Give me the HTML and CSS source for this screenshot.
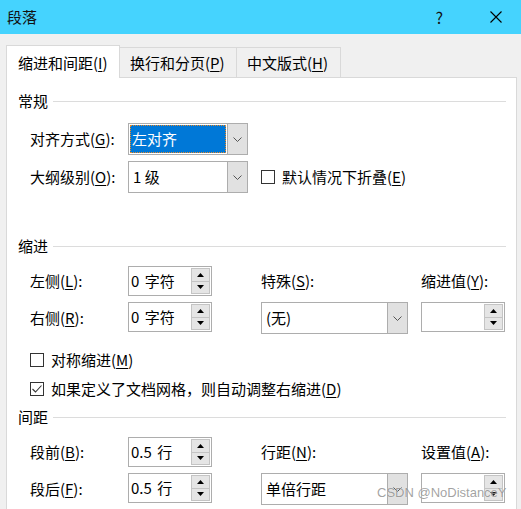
FILE: index.html
```html
<!DOCTYPE html>
<html lang="zh-CN">
<head>
<meta charset="utf-8">
<title>段落</title>
<link rel="stylesheet" href="styles.css">
</head>
<body>
<div class="window">
  <div class="titlebar">
    <span class="title">段落</span>
    <span class="help">?</span>
    <svg class="close" width="12" height="12" viewBox="0 0 12 12"><path d="M0.5 0.5 L11.5 11.5 M11.5 0.5 L0.5 11.5" stroke="#000" stroke-width="1.1" fill="none"/></svg>
  </div>

  <div class="tabs">
    <div class="tab active">缩进和间距(<u>I</u>)</div>
    <div class="tab">换行和分页(<u>P</u>)</div>
    <div class="tab">中文版式(<u>H</u>)</div>
  </div>

  <div class="panel">
    <div class="section-head s1"><span>常规</span></div>
    <div class="grid general">
      <div class="lbl">对齐方式(<u>G</u>):</div>
      <div class="combo">
        <div class="combo-val"><span class="sel">左对齐</span></div>
        <div class="combo-btn"><svg width="9" height="5" viewBox="0 0 9 5"><polyline points="0.5,0.5 4.5,4.5 8.5,0.5" fill="none" stroke="#555" stroke-width="1"/></svg></div>
      </div>
      <div></div>
      <div></div>
      <div class="lbl">大纲级别(<u>O</u>):</div>
      <div class="combo">
        <div class="combo-val"><span class="txt">1 级</span></div>
        <div class="combo-btn"><svg width="9" height="5" viewBox="0 0 9 5"><polyline points="0.5,0.5 4.5,4.5 8.5,0.5" fill="none" stroke="#555" stroke-width="1"/></svg></div>
      </div>
      <div></div>
      <div class="check"><span class="box"></span><span>默认情况下折叠(<u>E</u>)</span></div>
    </div>

    <div class="section-head s2"><span>缩进</span></div>
    <div class="grid spacing g2">
      <div class="lbl">左侧(<u>L</u>):</div>
      <div class="spin">
        <div class="spin-val">0 字符</div>
        <div class="spin-btns">
          <div class="sb"><svg width="7" height="4" viewBox="0 0 7 4"><polygon points="3.5,0 7,4 0,4" fill="#000"/></svg></div>
          <div class="sb"><svg width="7" height="4" viewBox="0 0 7 4"><polygon points="0,0 7,0 3.5,4" fill="#000"/></svg></div>
        </div>
      </div>
      <div></div>
      <div class="lbl">特殊(<u>S</u>):</div>
      <div></div>
      <div class="lbl">缩进值(<u>Y</u>):</div>

      <div class="lbl">右侧(<u>R</u>):</div>
      <div class="spin">
        <div class="spin-val">0 字符</div>
        <div class="spin-btns">
          <div class="sb"><svg width="7" height="4" viewBox="0 0 7 4"><polygon points="3.5,0 7,4 0,4" fill="#000"/></svg></div>
          <div class="sb"><svg width="7" height="4" viewBox="0 0 7 4"><polygon points="0,0 7,0 3.5,4" fill="#000"/></svg></div>
        </div>
      </div>
      <div></div>
      <div class="combo wide">
        <div class="combo-val"><span class="txt">(无)</span></div>
        <div class="combo-btn"><svg width="9" height="5" viewBox="0 0 9 5"><polyline points="0.5,0.5 4.5,4.5 8.5,0.5" fill="none" stroke="#555" stroke-width="1"/></svg></div>
      </div>
      <div></div>
      <div class="spin">
        <div class="spin-val"></div>
        <div class="spin-btns">
          <div class="sb"><svg width="7" height="4" viewBox="0 0 7 4"><polygon points="3.5,0 7,4 0,4" fill="#000"/></svg></div>
          <div class="sb"><svg width="7" height="4" viewBox="0 0 7 4"><polygon points="0,0 7,0 3.5,4" fill="#000"/></svg></div>
        </div>
      </div>
    </div>

    <div class="checks">
      <div class="check"><span class="box"></span><span>对称缩进(<u>M</u>)</span></div>
      <div class="check"><span class="box checked"><svg width="12" height="12" viewBox="0 0 12 12"><polyline points="1.5,6 4.5,9 10.5,2.5" fill="none" stroke="#333" stroke-width="1.1"/></svg></span><span>如果定义了文档网格，则自动调整右缩进(<u>D</u>)</span></div>
    </div>

    <div class="section-head s3"><span>间距</span></div>
    <div class="grid spacing g3">
      <div class="lbl">段前(<u>B</u>):</div>
      <div class="spin">
        <div class="spin-val">0.5 行</div>
        <div class="spin-btns">
          <div class="sb"><svg width="7" height="4" viewBox="0 0 7 4"><polygon points="3.5,0 7,4 0,4" fill="#000"/></svg></div>
          <div class="sb"><svg width="7" height="4" viewBox="0 0 7 4"><polygon points="0,0 7,0 3.5,4" fill="#000"/></svg></div>
        </div>
      </div>
      <div></div>
      <div class="lbl">行距(<u>N</u>):</div>
      <div></div>
      <div class="lbl">设置值(<u>A</u>):</div>

      <div class="lbl">段后(<u>F</u>):</div>
      <div class="spin">
        <div class="spin-val">0.5 行</div>
        <div class="spin-btns">
          <div class="sb"><svg width="7" height="4" viewBox="0 0 7 4"><polygon points="3.5,0 7,4 0,4" fill="#000"/></svg></div>
          <div class="sb"><svg width="7" height="4" viewBox="0 0 7 4"><polygon points="0,0 7,0 3.5,4" fill="#000"/></svg></div>
        </div>
      </div>
      <div></div>
      <div class="combo wide">
        <div class="combo-val"><span class="txt">单倍行距</span></div>
        <div class="combo-btn"><svg width="9" height="5" viewBox="0 0 9 5"><polyline points="0.5,0.5 4.5,4.5 8.5,0.5" fill="none" stroke="#555" stroke-width="1"/></svg></div>
      </div>
      <div></div>
      <div class="spin">
        <div class="spin-val"></div>
        <div class="spin-btns">
          <div class="sb"><svg width="7" height="4" viewBox="0 0 7 4"><polygon points="3.5,0 7,4 0,4" fill="#000"/></svg></div>
          <div class="sb"><svg width="7" height="4" viewBox="0 0 7 4"><polygon points="0,0 7,0 3.5,4" fill="#000"/></svg></div>
        </div>
      </div>
    </div>
  </div>

  <div class="watermark">CSDN @NoDistanceY</div>
</div>
</body>
</html>
```

FILE: styles.css
```css
* { box-sizing: border-box; }

html, body {
  margin: 0;
  padding: 0;
}

body {
  width: 521px;
  height: 509px;
  overflow: hidden;
  background: #f0f0f0;
  font-family: "Noto Sans CJK SC", "Microsoft YaHei", sans-serif;
  font-size: 15px;
  color: #000;
}

.window {
  position: relative;
  width: 521px;
  height: 509px;
  overflow: hidden;
}

u {
  text-decoration: underline;
  text-underline-offset: 2px;
  text-decoration-thickness: 1px;
}

/* title bar */
.titlebar {
  height: 34px;
  background: #45d3fe;
  display: flex;
  align-items: center;
  padding-left: 7px;
}

.title {
  flex: 1;
  line-height: 20px;
  color: #111;
}

.help {
  font-size: 16px;
  line-height: 20px;
  margin-right: 47px;
  color: #111;
}

.close {
  margin-right: 19px;
  display: block;
}

/* tabs */
.tabs {
  position: relative;
  z-index: 1;
  height: 44px;
  margin-bottom: -1px;
  padding-left: 6px;
  display: flex;
  align-items: flex-end;
}

.tab {
  height: 30px;
  margin-bottom: 1px;
  border: 1px solid #d9d9d9;
  border-bottom: none;
  background: #f0f0f0;
  padding-left: 10px;
  line-height: 29px;
  white-space: nowrap;
}

.tab.active {
  width: 114px;
  height: 33px;
  margin-bottom: 0;
  background: #fff;
  padding-left: 11px;
  line-height: 33px;
}

.tab:nth-child(2) {
  width: 117px;
  border-left: none;
}

.tab:nth-child(3) {
  width: 104px;
  border-left: none;
}

/* panel */
.panel {
  width: 511px;
  height: 432px;
  margin-left: 6px;
  background: #fff;
  border: 1px solid #d9d9d9;
  border-bottom: none;
  padding: 13px 10px 0 11px;
}

.section-head {
  height: 20px;
  display: flex;
  align-items: center;
  line-height: 20px;
}

.section-head::after {
  content: "";
  flex: 1;
  height: 1px;
  background: #dcdcdc;
  margin-left: 5px;
}

.s2 { margin-top: 43px; }
.s3 { margin-top: 8px; }

.grid {
  display: grid;
  padding-left: 12px;
  row-gap: 6px;
}

.general {
  margin-top: 12px;
  grid-template-columns: 98px 120px 13px 1fr;
  grid-template-rows: 32px 32px;
}

.spacing {
  grid-template-columns: 98px 84px 49px 147px 13px 84px;
  grid-template-rows: 30px 32px;
  align-items: start;
}

.g2 { margin-top: 10px; }
.g3 { margin-top: 10px; }

.lbl {
  align-self: center;
  line-height: 20px;
  white-space: nowrap;
}

/* combo box */
.combo {
  display: flex;
  height: 32px;
  border: 1px solid #adadad;
  background: #fff;
}

.combo.wide { width: 147px; }

.combo-val {
  flex: 1;
  display: flex;
  align-items: stretch;
  padding: 1px;
}

.combo-val .txt {
  padding-left: 3px;
  line-height: 28px;
  white-space: nowrap;
}

.combo-val .sel {
  flex: 1;
  background: #0078d7;
  color: #fff;
  border: 1px dotted #e88a2a;
  padding-left: 1px;
  line-height: 26px;
}

.combo-btn {
  width: 20px;
  background: #e1e1e1;
  border-left: 1px solid #adadad;
  display: flex;
  align-items: center;
  justify-content: center;
}

.combo-btn svg { display: block; }

/* spin box */
.spin {
  display: flex;
  height: 30px;
  width: 84px;
  border: 1px solid #adadad;
  background: #fff;
}

.spin-val {
  flex: 1;
  padding-left: 2px;
  line-height: 28px;
  white-space: nowrap;
  word-spacing: 2px;
}

.spin-btns {
  width: 19px;
  margin: 1px;
  display: flex;
  flex-direction: column;
}

.sb {
  flex: 1;
  background: #e5e5e5;
  border: 1px solid #c4c4c4;
  display: flex;
  align-items: center;
  justify-content: center;
}

.sb + .sb { border-top: none; }
.sb svg { display: block; }

/* checkboxes */
.check {
  display: flex;
  align-items: center;
  height: 20px;
  line-height: 20px;
  white-space: nowrap;
}

.general .check { align-self: center; }

.box {
  width: 14px;
  height: 14px;
  border: 1px solid #333;
  background: #fff;
  margin-right: 7px;
  display: flex;
  align-items: center;
  justify-content: center;
}

.box svg { display: block; }

.checks {
  margin-top: 16px;
  padding-left: 12px;
  display: flex;
  flex-direction: column;
  gap: 9px;
}

/* watermark */
.watermark {
  position: absolute;
  left: 377px;
  top: 485px;
  font-family: "Liberation Sans", Arial, sans-serif;
  font-size: 13px;
  color: rgba(100, 100, 100, 0.6);
  text-shadow: 0 0 1px rgba(255, 255, 255, 0.8);
  white-space: nowrap;
}
```
